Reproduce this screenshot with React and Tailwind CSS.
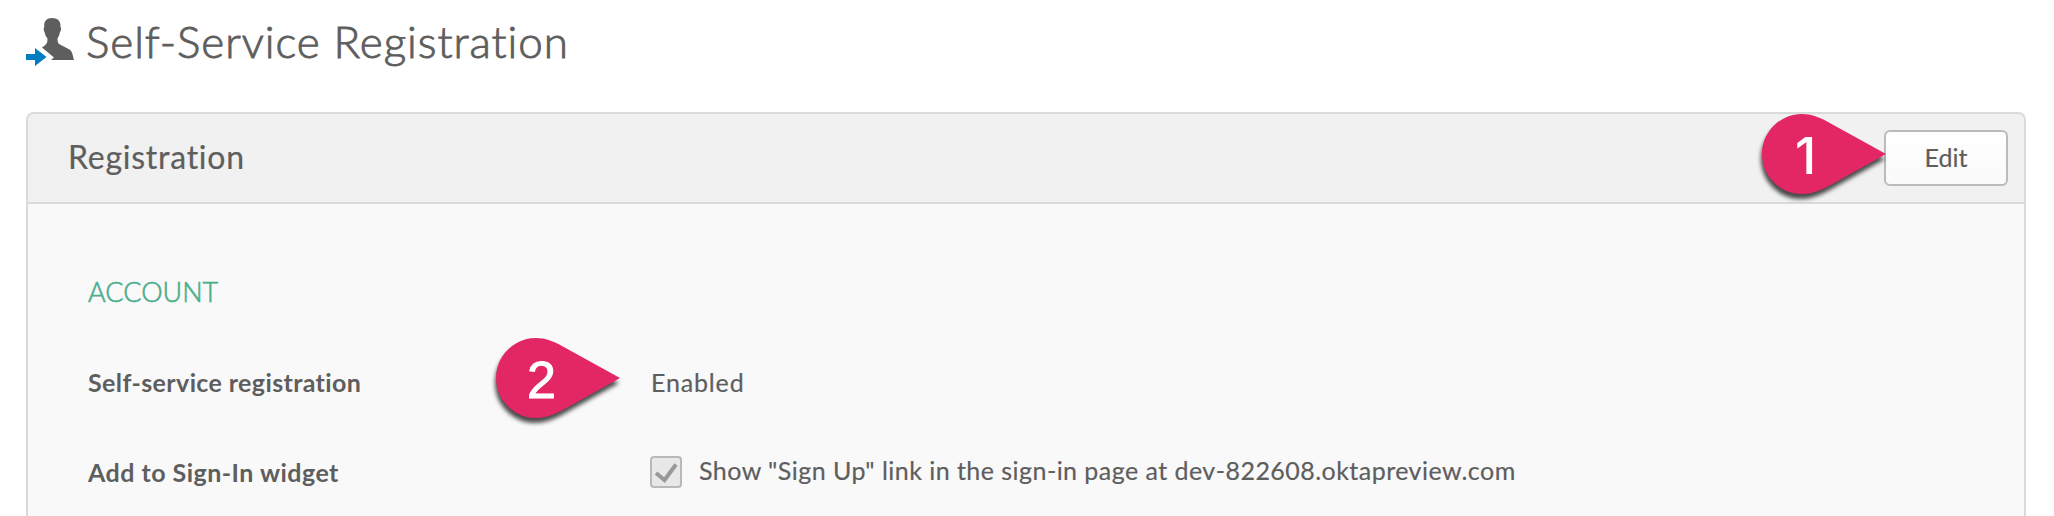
function Marker({ label, className, labelClass }) {
  return (
    <div className={"absolute h-20 w-[124px] " + className}>
      <svg className="absolute inset-0 overflow-visible drop-shadow-[-1px_5px_2px_rgba(0,0,0,0.7)]" width="124" height="80" viewBox="0 0 124 80">
        <path d="M40 0C18 0 0 18 0 40S18 80 40 80C49 80 58 76.500 66 72.500L124 40L66 8C58 3.500 49 0 40 0Z" fill="#e32765" />
      </svg>
      <span className={"absolute leading-[60px] text-white " + labelClass}>{label}</span>
    </div>
  );
}

function UserArrowIcon() {
  return (
    <svg width="48" height="50" viewBox="0 0 48 50">
      <path d="M26 0C31.500 0 35 3 34.500 9C35.500 10 35 13 34 14C33.500 17 32.500 19 31.500 20.500C31.500 24 32 25.500 34 26.500L43.500 31.500C46 33 46.500 36 48 42H25L28 39.500L16 29.500C20 27 21.500 25.500 21.500 20.500C20 19 19 16.500 18.500 14C17.500 12.500 17.500 10 18.300 9C17.500 3 21 0 26 0Z" fill="#5e5e5e" />
      <path d="M0 36H9V30L20.500 39L9 48V42H0Z" fill="#007dc1" />
    </svg>
  );
}

export default function App() {
  return (
    <div className="relative flex h-[516px] w-[2054px] flex-col overflow-hidden bg-white px-[26px] font-['Lato',sans-serif] text-[#5e5e5e]">
      <header className="flex h-28 shrink-0 pt-[18px]">
        <UserArrowIcon />
        <h1 className="-mt-0.5 ml-3 h-12 whitespace-nowrap text-[44px] font-light leading-[50px] tracking-[0.95px] [-webkit-text-stroke:0.9px_#5e5e5e]">Self-Service Registration</h1>
      </header>
      <section className="w-[2000px] grow rounded-t-lg border-2 border-b-0 border-[#dadada] bg-[#f9f9f9]">
        <div className="flex h-[90px] items-center justify-between rounded-t-md border-b-2 border-[#dadada] bg-[#f1f1f1] pl-10 pr-4">
          <h2 className="-mt-[3px] text-[32px] leading-10 tracking-[0.75px] [-webkit-text-stroke:0.2px_#5e5e5e]">Registration</h2>
          <button className="h-14 w-[124px] rounded-md border-2 border-[#bbb] bg-linear-to-b from-white to-[#fafafa] text-[25px] [-webkit-text-stroke:0.2px_#5e5e5e]">Edit</button>
        </div>
        <div className="pl-[60px] pt-[68px]">
          <h3 className="h-10 text-[27px] font-light leading-10 text-[#4cae8c] [-webkit-text-stroke:0.6px_#4cae8c]">ACCOUNT</h3>
          <div className="mt-[50px] flex h-10 text-[25px] leading-10">
            <div className="w-[562px] font-bold tracking-[0.38px]">Self-service registration</div>
            <div className="pl-px tracking-[0.85px] [-webkit-text-stroke:0.2px_#5e5e5e]">Enabled</div>
          </div>
          <div className="mt-[50px] flex h-10 text-[25px] leading-10">
            <div className="w-[562px] font-bold tracking-[0.48px]">Add to Sign-In widget</div>
            <div className="mt-1 flex size-8 items-center justify-center rounded border-2 border-[#b9b9b9] bg-[#e8e8e8]">
              <svg width="28" height="28" viewBox="0 0 28 28"><path d="M4 15L12.500 22L24 6.500" fill="none" stroke="#999" strokeWidth="4" /></svg>
            </div>
            <div className="-mt-0.5 ml-[17px] whitespace-nowrap tracking-[0.46px] [-webkit-text-stroke:0.2px_#5e5e5e]">Show "Sign Up" link in the sign-in page at dev-822608.oktapreview.com</div>
          </div>
        </div>
      </section>
      <Marker label="1" className="left-[1762px] top-[114px]" labelClass="left-[33px] top-[12px] text-[51px] font-medium font-['Inter',sans-serif]" />
      <Marker label="2" className="left-[496px] top-[338px]" labelClass="left-[31px] top-[12px] text-[52px] font-['Liberation_Sans',sans-serif] [-webkit-text-stroke:1px_white]" />
    </div>
  );
}
